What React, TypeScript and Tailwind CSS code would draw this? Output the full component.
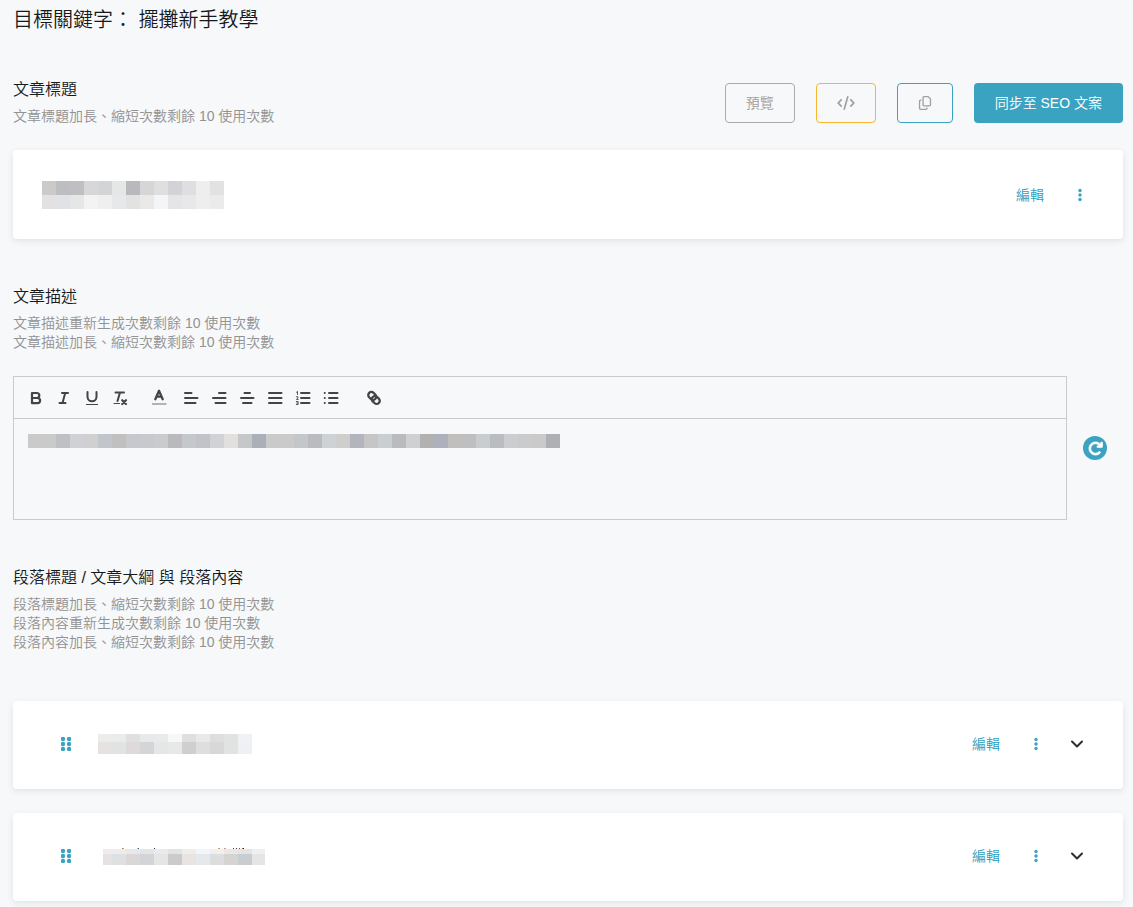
import type { ReactNode } from "react";
import { FaArrowRotateRight, FaCode, FaRegCopy } from "react-icons/fa6";

type MosaicRow = { y: number; height: number; colors: string[] };
type Speck = { x: number; color: string };

function Mosaic({
  width,
  height,
  rows,
  firstCell = 14,
  specks = [],
}: {
  width: number;
  height: number;
  rows: MosaicRow[];
  firstCell?: number;
  specks?: Speck[];
}) {
  return (
    <svg
      width={width}
      height={height}
      viewBox={`0 0 ${width} ${height}`}
      shapeRendering="crispEdges"
      role="img"
      aria-label="已遮蔽內容"
      className="block shrink-0"
    >
      {rows.map((row) =>
        row.colors.map((color, i) => {
          const x = i === 0 ? 0 : firstCell + (i - 1) * 14;
          return (
            <rect
              key={`${row.y}-${i}`}
              x={x}
              y={row.y}
              width={i === 0 ? firstCell : Math.min(14, width - x)}
              height={row.height}
              fill={color}
            />
          );
        }),
      )}
      {specks.map((s) => (
        <rect key={s.x} x={s.x} y={0} width={1} height={1} fill={s.color} />
      ))}
    </svg>
  );
}

const titleRows: MosaicRow[] = [
  { y: 0, height: 14, colors: ["#cccac9", "#bdbec1", "#bfbfc1", "#d6d7d9", "#d3d4d6", "#e5e7e7", "#b8b8bd", "#d6d6d7", "#dfdfdf", "#d3d3d7", "#dfdfe3", "#eeeeef", "#e2e2e2"] },
  { y: 14, height: 14, colors: ["#e4e2e1", "#e0e2e5", "#e4e7e6", "#f3f3f3", "#efeff0", "#e7e8eb", "#e2e2e2", "#eae9e7", "#f3f5f8", "#e5e5e8", "#e8e8ea", "#eeeeee", "#ebebec"] },
];

const descriptionRows: MosaicRow[] = [
  {
    y: 0,
    height: 14,
    colors: [
      "#cacacb", "#cacaca", "#bfc0c6", "#d0d1d5", "#d0d0d0", "#c2c6cc", "#c0c0c0", "#c6c8ce", "#c8c9cc", "#cacbcc",
      "#bababe", "#c4c8cc", "#c2c3c9", "#d0d2d6", "#e2e0de", "#c6c7c9", "#aab0b8", "#cacacb", "#cacaca", "#c4c7c9",
      "#babbbf", "#ced2d5", "#cfcecd", "#b2b5bd", "#c6c6c6", "#c8cfd3", "#babbbf", "#cfd0d1", "#b2b1b0", "#aeb1bb",
      "#c1bfbe", "#bebfc1", "#c9cdcf", "#babcc0", "#cccdd1", "#cacbcd", "#cacaca", "#afb0b3",
    ],
  },
];

const firstSectionRows: MosaicRow[] = [
  { y: 0, height: 8, colors: ["#ececed", "#eaebeb", "#e0e0e0", "#e8eaea", "#e9ebeb", "#f7f7f8", "#dfdfdf", "#e9e9eb", "#dededd", "#e2e2e2", "#f0f1f4"] },
  { y: 8, height: 12, colors: ["#e6e2e2", "#e0e2e4", "#dedad9", "#d2d6d7", "#e5e6e8", "#e8e8e8", "#cfcfcf", "#dededf", "#d8d8d8", "#e1e2e2", "#eff0f3"] },
];

const secondSectionRows: MosaicRow[] = [
  { y: 1, height: 5, colors: ["#ececec", "#ececed", "#e8e8e9", "#e4e4e5", "#e9ebea", "#e3e3e5", "#ededec", "#f3f6f9", "#f0f0f1", "#e9e8e7", "#e2e5e6", "#efeff0"] },
  { y: 6, height: 11, colors: ["#e6e2e2", "#dfe0e1", "#d9d7d8", "#d3d4d7", "#e3e6e5", "#cbcacc", "#e8e4e2", "#e5e9ed", "#dddddd", "#d5d4d2", "#c9cdd0", "#e4e5e7"] },
];

const secondSectionSpecks: Speck[] = [
  { x: 19, color: "#b9772d" },
  { x: 20, color: "#8fb5d5" },
  { x: 34, color: "#d9a56a" },
  { x: 35, color: "#286a9b" },
  { x: 51, color: "#30265f" },
  { x: 115, color: "#dda858" },
  { x: 116, color: "#7aa8c4" },
  { x: 121, color: "#c98c7c" },
  { x: 122, color: "#a8c5d8" },
  { x: 130, color: "#4b3865" },
  { x: 133, color: "#632e4b" },
  { x: 136, color: "#5f5368" },
  { x: 139, color: "#a85e2f" },
  { x: 140, color: "#1c2550" },
];

function ToolButton({ label, children }: { label: string; children: ReactNode }) {
  return (
    <button type="button" aria-label={label} className="size-7 shrink-0 text-[#444]">
      <svg
        viewBox="0 0 28 28"
        className="size-7"
        fill="none"
        stroke="currentColor"
        strokeWidth="2"
        strokeLinecap="round"
        strokeLinejoin="round"
      >
        {children}
      </svg>
    </button>
  );
}

function Toolbar() {
  return (
    <div role="toolbar" aria-label="文字格式" className="flex h-[42px] items-center border-b border-[#c8cbce] px-2">
      <ToolButton label="粗體">
        <path d="M10 9h4.800a2.500 2.500 0 0 1 0 5H10zM10 14h5.500a2.600 2.600 0 0 1 0 5.200H10z" strokeWidth="2.200" />
      </ToolButton>
      <ToolButton label="斜體">
        <path d="M12 9h6M9.500 19h6M15.200 9l-2.700 10" />
      </ToolButton>
      <ToolButton label="底線">
        <path d="M9.500 8v4.800a4.500 4.500 0 0 0 9 0V8" />
        <path d="M8.500 20.500h11" strokeWidth="1.200" />
      </ToolButton>
      <ToolButton label="清除格式">
        <path d="M9.500 8.500h8.500M14 8.500l-2.500 8.500" />
        <path d="M8 19.500h5.500" strokeWidth="1.200" />
        <path d="m16.200 16.200 3.800 3.800M20 16.200 16.200 20" strokeWidth="2.200" />
      </ToolButton>
      <div className="ml-[11px] flex">
        <ToolButton label="文字顏色">
          <path d="M10.300 15.200 14 6.700l3.700 8.500M11.700 12.700h4.600" strokeWidth="2.300" />
          <path d="M7 20h14.500" stroke="#b3b3b3" strokeLinecap="butt" />
        </ToolButton>
      </div>
      <div className="ml-1 flex">
        <ToolButton label="靠左對齊">
          <path d="M8 9h6.500M8 14h12.500M8 19h10.500" />
        </ToolButton>
        <ToolButton label="靠右對齊">
          <path d="M14 9h6.500M8 14h12.500M10.500 19h10" />
        </ToolButton>
        <ToolButton label="置中對齊">
          <path d="M11.500 9h5.500M8 14h12.500M10 19h8.500" />
        </ToolButton>
        <ToolButton label="左右對齊">
          <path d="M8 9h12.500M8 14h12.500M8 19h12.500" />
        </ToolButton>
        <ToolButton label="編號清單">
          <path d="M12 9h8.500M12 14h8.500M12 19h8.500" />
          <path d="m7.500 8.200 1-.7v3M7.300 12.800h1.700v1l-1.500 1.700h1.700M7.300 17.500h1.800v3H7.300M7.800 19h1" strokeWidth=".9" />
        </ToolButton>
        <ToolButton label="項目清單">
          <path d="M12 9h8.500M12 14h8.500M12 19h8.500" />
          <path d="M7.700 9h.1M7.700 14h.1M7.700 19h.1" />
        </ToolButton>
      </div>
      <div className="ml-[15px] flex">
        <ToolButton label="插入連結">
          <rect x="7.900" y="8.800" width="8.600" height="6.200" rx="3.100" strokeWidth="2.300" transform="rotate(45 12.200 11.900)" />
          <rect x="11.500" y="12.900" width="8.600" height="6.200" rx="3.100" strokeWidth="2.300" transform="rotate(45 15.800 16)" />
        </ToolButton>
      </div>
    </div>
  );
}

function EditActions() {
  return (
    <>
      <button type="button" className="text-sm leading-5 text-[#2f9dbd]">
        編輯
      </button>
      <button type="button" aria-label="更多選項" className="ml-[30px] text-[#3aa3c2]">
        <svg width="12" height="14" viewBox="0 0 12 14" fill="currentColor" className="block">
          <circle cx="6" cy="2.500" r="1.700" />
          <circle cx="6" cy="7" r="1.700" />
          <circle cx="6" cy="11.500" r="1.700" />
        </svg>
      </button>
    </>
  );
}

function SectionCard({ children }: { children: ReactNode }) {
  return (
    <article className="flex h-[88px] items-center rounded-[4px] bg-white pr-[38px] pb-0.5 pl-12 shadow-[0_2px_6px_#dfe2e7]">
      <button type="button" aria-label="拖曳排序" className="text-[#3aa3c2]">
        <svg width="10" height="14" viewBox="0 0 10 14" fill="currentColor" className="block">
          {[2, 8].map((x) => [2, 7, 12].map((y) => <circle key={`${x}-${y}`} cx={x} cy={y} r="2.200" />))}
        </svg>
      </button>
      {children}
      <div className="ml-auto flex items-center">
        <EditActions />
        <button type="button" aria-label="展開段落" className="ml-[27px] text-[#2b2e31]">
          <svg
            width="16"
            height="16"
            viewBox="0 0 16 16"
            fill="none"
            stroke="currentColor"
            strokeWidth="2"
            strokeLinecap="round"
            strokeLinejoin="round"
            className="block"
          >
            <path d="m3 5.500 5 5 5-5" />
          </svg>
        </button>
      </div>
    </article>
  );
}

function SectionHeader({ title, notes }: { title: string; notes: string[] }) {
  return (
    <header>
      <h2 className="text-base leading-6 text-[#16191c]">{title}</h2>
      <div className="mt-[5px] text-sm leading-[19px] text-[#929292]">
        {notes.map((note) => (
          <p key={note}>{note}</p>
        ))}
      </div>
    </header>
  );
}

export default function App() {
  return (
    <main className="min-h-screen bg-[#f7f8fa] pt-[5px] pr-[10px] pb-[6px] pl-[13px] font-['Liberation_Sans','Noto_Sans_CJK_TC',sans-serif] font-[350]">
      <h1 className="text-xl leading-[30px] text-[#16191c]">目標關鍵字： 擺攤新手教學</h1>

      <section className="mt-[43px]">
        <div className="flex items-start justify-between">
          <SectionHeader title="文章標題" notes={["文章標題加長、縮短次數剩餘 10 使用次數"]} />
          <div className="mt-[5px] flex gap-[21px] text-sm text-[#a0a0a0]">
            <button type="button" className="h-10 rounded-[4px] border border-[#a8abae] px-5">
              預覽
            </button>
            <button type="button" aria-label="原始碼" className="h-10 rounded-[4px] border border-[#f7b731] px-5">
              <FaCode className="h-[14px] w-[18px]" />
            </button>
            <button type="button" aria-label="複製" className="h-10 rounded-[4px] border border-[#3aa3c2] px-5">
              <FaRegCopy className="size-[14px]" />
            </button>
            <button type="button" className="h-10 rounded-[4px] bg-[#3aa3c2] px-[21px] text-white">
              同步至 SEO 文案
            </button>
          </div>
        </div>
        <div className="mt-6 flex h-[89px] items-center rounded-[4px] bg-white pt-px pr-[37px] pl-[29px] shadow-[0_2px_6px_#dfe2e7]">
          <Mosaic width={182} height={28} rows={titleRows} />
          <div className="ml-auto flex items-center">
            <EditActions />
          </div>
        </div>
      </section>

      <section className="mt-[46px]">
        <SectionHeader
          title="文章描述"
          notes={["文章描述重新生成次數剩餘 10 使用次數", "文章描述加長、縮短次數剩餘 10 使用次數"]}
        />
        <div className="mt-6 flex items-center">
          <div className="min-w-0 flex-1 border border-[#c8cbce]">
            <Toolbar />
            <div
              role="textbox"
              aria-multiline="true"
              aria-label="文章描述"
              tabIndex={0}
              className="min-h-[100px] overflow-hidden px-[14px] py-[15px]"
            >
              <Mosaic width={532} height={14} rows={descriptionRows} />
            </div>
          </div>
          <button
            type="button"
            aria-label="重新生成"
            className="mr-4 ml-4 flex size-6 shrink-0 items-center justify-center rounded-full bg-[#3aa3c2] text-white"
          >
            <FaArrowRotateRight className="size-[15px] stroke-current stroke-[24]" />
          </button>
        </div>
      </section>

      <section className="mt-[46px]">
        <SectionHeader
          title="段落標題 / 文章大綱 與 段落內容"
          notes={[
            "段落標題加長、縮短次數剩餘 10 使用次數",
            "段落內容重新生成次數剩餘 10 使用次數",
            "段落內容加長、縮短次數剩餘 10 使用次數",
          ]}
        />
        <div className="mt-[49px] flex flex-col gap-6">
          <SectionCard>
            <div className="ml-[27px]">
              <Mosaic width={154} height={20} rows={firstSectionRows} />
            </div>
          </SectionCard>
          <SectionCard>
            <div className="ml-8">
              <Mosaic width={162} height={17} firstCell={9} rows={secondSectionRows} specks={secondSectionSpecks} />
            </div>
          </SectionCard>
        </div>
      </section>
    </main>
  );
}
